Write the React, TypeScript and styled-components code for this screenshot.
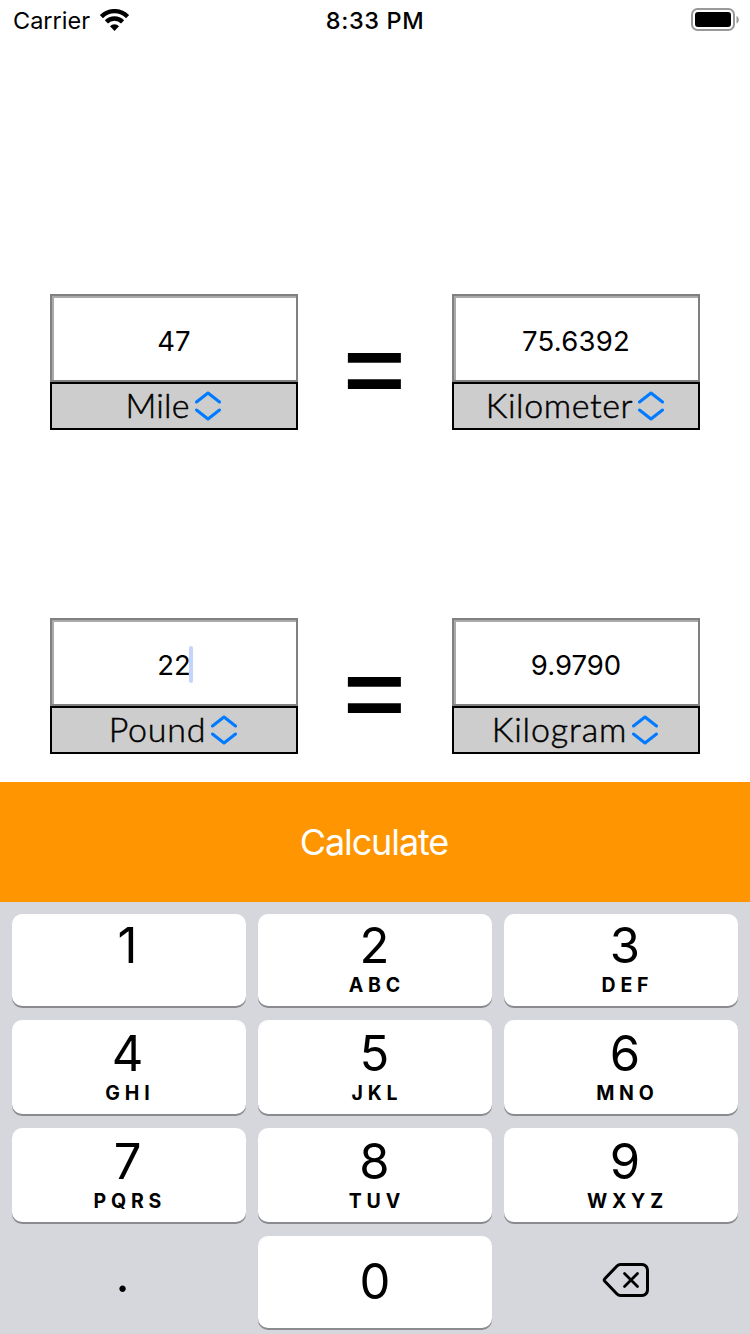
import React from 'react';
import styled, { createGlobalStyle } from 'styled-components';

const GlobalStyle = createGlobalStyle`
  * { box-sizing: border-box; }
  body { margin: 0; background: #fff; }
`;

const Screen = styled.div`
  width: 750px;
  height: 1334px;
  display: flex;
  flex-direction: column;
  background: #fff;
  color: #000;
  font-family: Inter, 'Liberation Sans', sans-serif;
  overflow: hidden;
`;

const StatusBar = styled.header`
  height: 40px;
  display: grid;
  grid-template-columns: 1fr auto 1fr;
  align-items: center;
  padding: 0 11px 0 13px;
  font-size: 23.5px;
  line-height: 40px;
`;

const Carrier = styled.div`
  display: flex;
  align-items: center;
  gap: 10px;
`;

const StatusText = styled.span`
  padding-top: 2px;
  line-height: 38px;
`;

const Clock = styled.time`
  padding-top: 2px;
  line-height: 38px;
  font-weight: 500;
  letter-spacing: 0.6px;
  margin-left: -2px;
`;

const BatterySlot = styled.div`
  display: flex;
  justify-content: flex-end;
`;

const Converters = styled.main`
  height: 742px;
  padding: 254px 50px 0;
  display: flex;
  flex-direction: column;
  gap: 188px;
`;

const ConverterRow = styled.section`
  height: 136px;
  display: flex;
  justify-content: space-between;
`;

const Quantity = styled.div`
  width: 248px;
  display: flex;
  flex-direction: column;
`;

const Field = styled.div`
  height: 88px;
  border: 2px solid #808080;
  box-shadow: inset 2px 2px 0 #aaa;
  display: flex;
  align-items: center;
  justify-content: center;
  padding-top: 6px;
  font-size: 27.5px;
  line-height: 36px;
`;

const FieldValue = styled.span<{ $tracking?: number }>`
  position: relative;
  letter-spacing: ${(p) => p.$tracking ?? 0}px;
`;

const Caret = styled.i`
  position: absolute;
  left: 100%;
  top: -1px;
  width: 4px;
  height: 37px;
  margin-left: -2px;
  border-radius: 2px;
  background: #c7d3fb;
`;

const UnitPicker = styled.div`
  height: 48px;
  border: 2px solid #000;
  background: #cdcdcd;
  display: flex;
  align-items: center;
  justify-content: center;
  gap: 5px;
  padding-right: 2px;
  font-family: Lato, 'Liberation Sans', sans-serif;
  font-weight: 300;
  font-size: 34px;
`;

const UnitName = styled.span<{ $tracking?: number }>`
  line-height: 42px;
  padding-bottom: 2px;
  letter-spacing: ${(p) => p.$tracking ?? 0}px;
  -webkit-text-stroke: 0.5px #000;
`;

const Equals = styled.span`
  font-family: 'Liberation Sans', sans-serif;
  font-size: 105px;
  line-height: 136px;
  height: 136px;
  padding-top: 8px;
  margin-left: -1px;
  -webkit-text-stroke: 2px #000;
`;

const CalculateButton = styled.button`
  height: 120px;
  border: 0;
  padding: 0 2px 0 0;
  background: #ff9500;
  color: #fff;
  font-family: inherit;
  font-size: 36px;
  font-weight: 400;
  line-height: 120px;
  letter-spacing: -1.1px;
`;

const Keypad = styled.div`
  flex: 1;
  background: #d6d7dc;
  padding: 12px 12px 0;
  display: grid;
  grid-template-columns: repeat(3, 234px);
  grid-template-rows: 92px 94px 94px 92px;
  column-gap: 12px;
  row-gap: 14px;
`;

const Key = styled.div<{ $plain?: boolean; $center?: boolean; $pad?: string }>`
  display: flex;
  flex-direction: column;
  align-items: center;
  justify-content: ${(p) => (p.$center ? 'center' : 'flex-start')};
  padding: ${(p) => p.$pad ?? '0'};
  border-radius: 10px;
  background: ${(p) => (p.$plain ? 'transparent' : '#fff')};
  box-shadow: ${(p) => (p.$plain ? 'none' : '0 2px 0 #8a8b8f')};
`;

const Digit = styled.span`
  font-size: 49px;
  line-height: 60px;
`;

const Letters = styled.span`
  font-size: 19.5px;
  font-weight: 700;
  line-height: 19px;
  letter-spacing: 4.8px;
  margin-right: -4.8px;
`;

const WifiIcon = () => (
  <svg width="29" height="22" viewBox="0 0 29 22">
    <g fill="none" stroke="#000">
      <path d="M1.400 7.600a18.500 18.500 0 0 1 26.200 0" strokeWidth="4.400" />
      <path d="M6.400 12.900a11.400 11.400 0 0 1 16.200 0" strokeWidth="4.400" />
    </g>
    <path d="M10 17.300a6.200 6.200 0 0 1 9 0L14.500 21.900z" />
  </svg>
);

const BatteryIcon = () => (
  <svg width="48" height="24" viewBox="0 0 48 24">
    <rect x="1" y="1" width="42" height="21" rx="5.500" fill="none" stroke="#999" strokeWidth="2" />
    <rect x="4" y="4" width="36" height="15" rx="3" />
    <path d="M45.500 8c3 1 3 6.400 0 7.400z" fill="#999" />
  </svg>
);

const ChevronsIcon = () => (
  <svg width="26" height="30" viewBox="0 0 26 30">
    <path
      d="M1.500 11 13 2l11.500 9M1.500 19 13 28l11.500-9"
      fill="none"
      stroke="#007aff"
      strokeWidth="3"
      strokeLinecap="round"
      strokeLinejoin="round"
    />
  </svg>
);

const DeleteIcon = () => (
  <svg width="48" height="36" viewBox="0 0 48 36" fill="none" stroke="#000" strokeLinecap="round" strokeLinejoin="round">
    <path d="M18.500 2.500H40a5.500 5.500 0 0 1 5.500 5.500v20a5.500 5.500 0 0 1-5.500 5.500H18.500q-2 0-3.500-1.500L2.800 19.300q-1.200-1.300 0-2.600L15 4q1.500-1.500 3.500-1.500z" strokeWidth="3" />
    <path d="m22.500 11.500 13 13m0-13-13 13" strokeWidth="2.800" />
  </svg>
);

type Side = { value: string; unit: string; valueTracking?: number; unitTracking?: number; editing?: boolean };

const conversions: { from: Side; to: Side }[] = [
  {
    from: { value: '47', unit: 'Mile', unitTracking: 0.2 },
    to: { value: '75.6392', unit: 'Kilometer', valueTracking: 0.2, unitTracking: 0.6 },
  },
  {
    from: { value: '22', unit: 'Pound', unitTracking: 0.8, editing: true },
    to: { value: '9.9790', unit: 'Kilogram', unitTracking: 0.9 },
  },
];

const keys = [
  ['1', ''], ['2', 'ABC'], ['3', 'DEF'],
  ['4', 'GHI'], ['5', 'JKL'], ['6', 'MNO'],
  ['7', 'PQRS'], ['8', 'TUV'], ['9', 'WXYZ'],
];

// Labels in the outer columns lean slightly towards the screen edges.
const keyPadding = (index: number) => {
  const top = index < 3 ? 2 : 4;
  return [`${top}px 3px 0 0`, `${top}px 1px 0 0`, `${top}px 0 0 8px`][index % 3];
};

const QuantityBox = ({ side }: { side: Side }) => (
  <Quantity>
    <Field>
      <FieldValue $tracking={side.valueTracking}>
        {side.value}
        {side.editing && <Caret />}
      </FieldValue>
    </Field>
    <UnitPicker>
      <UnitName $tracking={side.unitTracking}>{side.unit}</UnitName>
      <ChevronsIcon />
    </UnitPicker>
  </Quantity>
);

export default function App() {
  return (
    <Screen>
      <GlobalStyle />
      <StatusBar>
        <Carrier>
          <StatusText>Carrier</StatusText>
          <WifiIcon />
        </Carrier>
        <Clock>8:33 PM</Clock>
        <BatterySlot>
          <BatteryIcon />
        </BatterySlot>
      </StatusBar>
      <Converters>
        {conversions.map((c) => (
          <ConverterRow key={c.from.unit}>
            <QuantityBox side={c.from} />
            <Equals>=</Equals>
            <QuantityBox side={c.to} />
          </ConverterRow>
        ))}
      </Converters>
      <CalculateButton>Calculate</CalculateButton>
      <Keypad>
        {keys.map(([digit, letters], i) => (
          <Key key={digit} $pad={keyPadding(i)}>
            <Digit>{digit}</Digit>
            {letters && <Letters>{letters}</Letters>}
          </Key>
        ))}
        <Key $plain $center $pad="0 13px 14px 0">
          <Digit>.</Digit>
        </Key>
        <Key $center>
          <Digit>0</Digit>
        </Key>
        <Key $plain $center $pad="0 0 4px 10px">
          <DeleteIcon />
        </Key>
      </Keypad>
    </Screen>
  );
}
